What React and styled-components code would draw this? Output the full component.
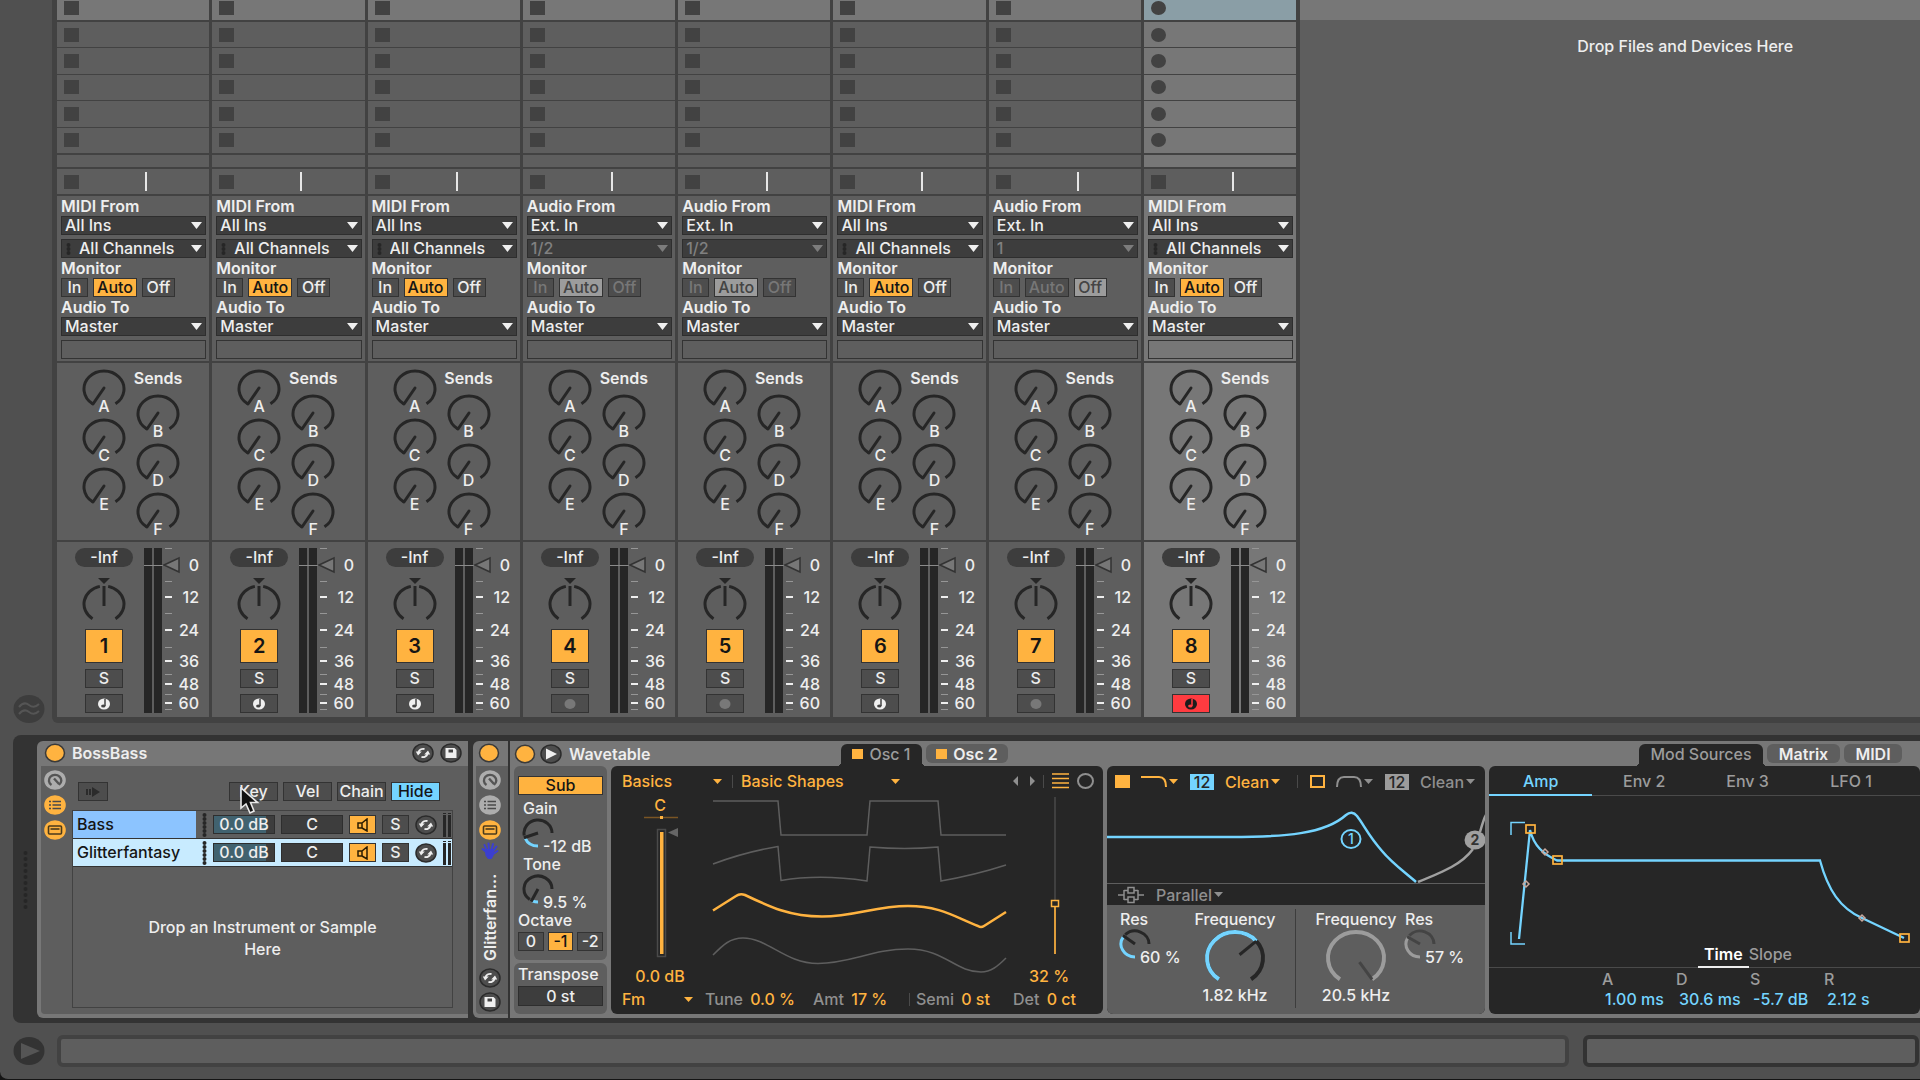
import { useState } from "react";
import styled, { createGlobalStyle } from "styled-components";

const tracks = [
  { id: 1, kind: "midi", from: "All Ins", channel: "All Channels", monitor: "Auto" },
  { id: 2, kind: "midi", from: "All Ins", channel: "All Channels", monitor: "Auto" },
  { id: 3, kind: "midi", from: "All Ins", channel: "All Channels", monitor: "Auto" },
  { id: 4, kind: "audio", from: "Ext. In", channel: "1/2", monitor: "Auto" },
  { id: 5, kind: "audio", from: "Ext. In", channel: "1/2", monitor: "Auto" },
  { id: 6, kind: "midi", from: "All Ins", channel: "All Channels", monitor: "Auto" },
  { id: 7, kind: "audio", from: "Ext. In", channel: "1", monitor: "Off" },
  { id: 8, kind: "midi", from: "All Ins", channel: "All Channels", monitor: "Auto", armed: true },
];

const chains = [
  { name: "Bass", color: "#8cc4ff" },
  { name: "Glitterfantasy", color: "#c8ebff", selected: true },
];

const envelope = [
  ["A", "1.00 ms"],
  ["D", "30.6 ms"],
  ["S", "-5.7 dB"],
  ["R", "2.12 s"],
];

//Point on an ellipse, angle in degrees going clockwise from the right.
const point = (cx, cy, rx, ry, angle) => {
  const rad = (angle * Math.PI) / 180;
  return [cx + rx * Math.cos(rad), cy + ry * Math.sin(rad)];
};

const arc = (cx, cy, rx, ry, from, to) => {
  const [x1, y1] = point(cx, cy, rx, ry, from);
  const [x2, y2] = point(cx, cy, rx, ry, to);
  return `M${x1} ${y1}A${rx} ${ry} 0 ${to - from > 180 ? 1 : 0} 1 ${x2} ${y2}`;
};

const SendKnob = ({ name, track }) => (
  <KnobCell>
    <svg width="44" height="40" viewBox="0 0 44 40" fill="none" stroke="#262626">
      <path d={arc(22, 20, 20, 18, 125, 415)} strokeWidth="3" />
      <path d="M22 19L11 35" strokeWidth="3" strokeLinecap="round" />
    </svg>
    <span>{name}</span>
    <HiddenRange aria-label={`Send ${name} track ${track}`} defaultValue="0" />
  </KnobCell>
);

//Small three-quarter knob, leaves the bottom right corner free for its value.
const SmallKnob = ({ label, text, value, dim }) => {
  const angle = 90 + 270 * value;
  const [x, y] = point(16, 15, 15, 14, angle);
  return (
    <SmallKnobBox>
      <span>{label}</span>
      <SmallKnobBody>
        <svg width="32" height="30" viewBox="0 0 32 30" fill="none" strokeWidth="3">
          <path d={arc(16, 15, 14, 13, 90, angle - 3)} stroke={dim ? "#9c9c9c" : "#74d4ff"} />
          <path d={arc(16, 15, 14, 13, angle + 9, 360)} stroke={dim ? "#444" : "#262626"} />
          <path d={`M16 15L${x} ${y}`} stroke={dim ? "#444" : "#262626"} />
        </svg>
        <output>{text}</output>
        <HiddenRange aria-label={label} defaultValue={value * 100} />
      </SmallKnobBody>
    </SmallKnobBox>
  );
};

const BigKnob = ({ text, value, dim }) => {
  const angle = 125 + 290 * value;
  const [x1, y1] = point(32, 29, 6, 5, angle);
  const [x2, y2] = point(32, 29, 28, 26, angle);
  return (
    <BigKnobBox>
      <span>Frequency</span>
      <svg width="64" height="58" viewBox="0 0 64 58" fill="none" strokeWidth="4">
        <path d={arc(32, 29, 28, 26, 125, 415)} stroke={dim ? "#9c9c9c" : "#262626"} />
        {!dim && <path d={arc(32, 29, 28, 26, 125, angle)} stroke="#74d4ff" />}
        <path d={`M${x1} ${y1}L${x2} ${y2}`} stroke={dim ? "#444" : "#262626"} strokeWidth="3" />
      </svg>
      <output>{text}</output>
      <HiddenRange aria-label="Frequency" defaultValue={value * 100} />
    </BigKnobBox>
  );
};

const Caret = ({ color = "#ffb340", w = 9 }) => (
  <svg width={w} height="5" viewBox="0 0 9 5" aria-hidden="true">
    <path d="M0 0H9L4.500 5Z" fill={color} />
  </svg>
);

const SwapIcon = () => (
  <svg width="22" height="20" viewBox="0 0 22 20">
    <ellipse cx="11" cy="10" rx="10" ry="9" fill="#4d4d4d" stroke="#2b2b2b" strokeWidth="1.500" />
    <path d="M6.500 9.500C7 7 9.500 5.500 12.500 6M15.500 10.500C15 13 12.500 14.500 9.500 14" fill="none" stroke="#eee" strokeWidth="2" />
    <path d="M3.800 8.500H9.800L6 12.500ZM18.200 11.500H12.200L16 7.500Z" fill="#eee" />
  </svg>
);

const SaveIcon = () => (
  <svg width="22" height="20" viewBox="0 0 22 20">
    <ellipse cx="11" cy="10" rx="10" ry="9" fill="#4d4d4d" stroke="#2b2b2b" strokeWidth="1.500" />
    <path d="M5.500 5H14.500L16.500 7V15H5.500Z" fill="#f0f0f0" />
    <path d="M8.500 6.500H13V9.500H8.500Z" fill="#444" />
  </svg>
);

const PowerIcon = () => (
  <svg width="22" height="20" viewBox="0 0 22 20">
    <ellipse cx="11" cy="10" rx="9.500" ry="8.700" fill="#ffb340" stroke="#3a3a3a" strokeWidth="1.500" />
  </svg>
);

const MacroIcon = () => (
  <svg width="22" height="20" viewBox="0 0 22 20">
    <ellipse cx="11" cy="10" rx="10.800" ry="9.800" fill="#adadad" />
    <path d="M7.500 15A6.200 5.600 0 1 1 15 14.800M10 8.500L15 14" fill="none" stroke="#555" strokeWidth="2.400" />
  </svg>
);

const ListIcon = ({ on }) => (
  <svg width="22" height="20" viewBox="0 0 22 20">
    <ellipse cx="11" cy="10" rx="10.800" ry="9.800" fill={on ? "#ffb340" : "#adadad"} />
    <path d="M5 6.500H7M5 10H7M5 13.500H7M8.500 6.500H17M8.500 10H17M8.500 13.500H17" stroke="#4a4a4a" strokeWidth="1.700" />
  </svg>
);

const DeviceIcon = () => (
  <svg width="22" height="20" viewBox="0 0 22 20">
    <ellipse cx="11" cy="10" rx="10.800" ry="9.800" fill="#ffb340" />
    <rect x="4.500" y="6" width="13" height="8" rx="1" fill="none" stroke="#4a3a1c" strokeWidth="1.600" />
    <path d="M6.500 9H15.500" stroke="#4a3a1c" strokeWidth="1.600" />
  </svg>
);

const HandIcon = () => (
  <svg width="18" height="18" viewBox="0 0 18 18">
    <path
      d="M4 9L1.500 7M5.500 8L3.500 3M8 8L7.500 1.500M10.500 8L12 2M12.500 9L15.500 4.500M11.500 12.500L16.500 9"
      stroke="#3b3fd0" strokeWidth="2" strokeLinecap="round"
    />
    <path d="M3.500 7H13L12.500 14L10.500 17H7L4.500 13.500Z" fill="#3b3fd0" />
  </svg>
);

const NoteIcon = ({ color, hole }) => (
  <svg width="14" height="12" viewBox="0 0 14 12">
    <ellipse cx="7" cy="6" rx="6" ry="5.500" fill={color} />
    <path d="M8 1V8" stroke={hole} strokeWidth="1.500" />
    <ellipse cx="6.300" cy="8" rx="2.200" ry="1.600" fill={hole} />
  </svg>
);

const DotColumn = ({ count, r = 2, step = 4, color = "#262626" }) => (
  <svg width={r * 2 + 1} height={count * step} aria-hidden="true">
    {Array.from({ length: count }, (_, i) => (
      <circle key={i} cx={r + 0.5} cy={i * step + step / 2} r={r} fill={color} />
    ))}
  </svg>
);

const Dropdown = ({ label, value, dim, dots }) => (
  <SelectBox>
    <Select aria-label={label} defaultValue={value} disabled={dim} $dots={dots}>
      <option>{value}</option>
    </Select>
    {dots && <Dots><DotColumn count={3} r={2} /></Dots>}
    <Arrow><svg width="11" height="7"><path d="M0 0H11L5.500 7Z" fill={dim ? "#7c7c7c" : "#f0f0f0"} /></svg></Arrow>
  </SelectBox>
);

const Meter = ({ selected }) => {
  const bg = selected ? "#777" : "#5e5e5e";
  return (
    <svg width="58" height="166" viewBox="0 0 58 166">
      <path d="M0 0H8V165H0ZM10 0H18V165H10Z" fill="#262626" />
      <path d="M0 17.500H19" stroke="#8a8a8a" />
      <path d="M20 17L35 10V24Z" fill={bg === "#777" ? bg : "#777"} stroke="#333" strokeWidth="1.500" />
      <path d="M21 .5H28M21 33.500H28M21 65.500H28M21 99.500H28M21 126.500H28M21 146.500H28M21 161.500H28" stroke="#969696" />
      <path d="M21 49H28M21 82H28M21 113H28M21 136H28M21 155H28" stroke="#eee" strokeWidth="2" />
      <ScaleText x="55" y="23">0</ScaleText>
      <ScaleText x="55" y="55">12</ScaleText>
      <ScaleText x="55" y="88">24</ScaleText>
      <ScaleText x="55" y="119">36</ScaleText>
      <ScaleText x="55" y="142">48</ScaleText>
      <ScaleText x="55" y="161">60</ScaleText>
    </svg>
  );
};

const Track = ({ track }) => {
  const [monitor, setMonitor] = useState(track.monitor);
  const audio = track.kind === "audio";
  const sel = track.armed;

  return (
    <TrackColumn>
      <TopSlot $selected={sel}><SlotButton aria-label="Clip slot" $round={sel} /></TopSlot>
      <Slots>
        {[1, 2, 3, 4, 5].map((n) => (
          <Slot key={n} $selected={sel}><SlotButton aria-label="Clip slot" $round={sel} /></Slot>
        ))}
      </Slots>
      <EmptySlot $selected={sel} />
      <StopRow>
        <SlotButton aria-label="Stop clips" />
        <StopLine />
      </StopRow>

      <Routing $selected={sel}>
        <Label>{audio ? "Audio From" : "MIDI From"}</Label>
        <Dropdown label="Input type" value={track.from} />
        <Gap />
        <Dropdown label="Input channel" value={track.channel} dim={audio} dots={!audio} />
        <Label>Monitor</Label>
        <MonitorRow>
          {["In", "Auto", "Off"].map((m) => (
            <MonitorButton key={m} $on={monitor === m} $dim={audio} $w={{ In: 27, Auto: 44, Off: 33 }[m]} onClick={() => setMonitor(m)}>
              {m}
            </MonitorButton>
          ))}
        </MonitorRow>
        <Label>Audio To</Label>
        <Dropdown label="Output type" value="Master" />
        <Gap />
        <OutputBox />
      </Routing>

      <Sends $selected={sel}>
        <SendColumn>
          {["A", "C", "E"].map((s) => <SendKnob key={s} name={s} track={track.id} />)}
        </SendColumn>
        <SendColumn>
          <SendsTitle>Sends</SendsTitle>
          {["B", "D", "F"].map((s) => <SendKnob key={s} name={s} track={track.id} />)}
        </SendColumn>
      </Sends>

      <Mixer $selected={sel}>
        <MixerControls>
          <Peak>-Inf</Peak>
          <Pan>
            <svg width="44" height="46" viewBox="0 0 44 46" fill="none" stroke="#262626" strokeWidth="3">
              <path d="M16 1H28L22 7Z" fill="#262626" stroke="none" />
              <path d={arc(22, 27, 20, 18, 125, 258)} />
              <path d={arc(22, 27, 20, 18, 282, 415)} />
              <path d="M22 9V29" />
            </svg>
            <HiddenRange aria-label={`Pan track ${track.id}`} />
          </Pan>
          <Activator>{track.id}</Activator>
          <SmallButton aria-label="Solo">S</SmallButton>
          <SmallButton aria-label="Arm" $armed={sel}>
            {audio ? (
              <svg width="14" height="12"><ellipse cx="7" cy="6" rx="5.500" ry="5" fill="#787878" /></svg>
            ) : (
              <NoteIcon color={sel ? "#1c1c1c" : "#f0f0f0"} hole={sel ? "#ff3b40" : "#444"} />
            )}
          </SmallButton>
        </MixerControls>
        <Meter selected={sel} />
      </Mixer>
    </TrackColumn>
  );
};

const Session = () => (
  <SessionRow>
    <Gutter>
      <svg width="32" height="28" viewBox="0 0 32 28">
        <ellipse cx="16" cy="14" rx="15.500" ry="14" fill="#3d3d3d" />
        <path d="M6 12Q11 6 16 10T26 9M6 19Q11 13 16 17T26 16" fill="none" stroke="#555" strokeWidth="2" />
      </svg>
    </Gutter>
    <SessionFrame>
      <TrackGrid>
        {tracks.map((track) => <Track key={track.id} track={track} />)}
      </TrackGrid>
      <DropZone>
        <DropTop />
        <DropText>Drop Files and Devices Here</DropText>
      </DropZone>
    </SessionFrame>
  </SessionRow>
);

const InstrumentRack = () => (
  <Rack>
    <RackHeader>
      <PowerIcon />
      <Title>BossBass</Title>
      <IconButton aria-label="Hot-swap"><SwapIcon /></IconButton>
      <IconButton aria-label="Save preset"><SaveIcon /></IconButton>
    </RackHeader>
    <RackBody>
      <IconColumn>
        <MacroIcon />
        <ListIcon on />
        <DeviceIcon />
      </IconColumn>
      <RackMain>
        <RackToolbar>
          <RackButton aria-label="Auto select" $w={30}>
            <svg width="14" height="10"><path d="M0 2H2V8H0ZM3 2H5V8H3ZM6 0L14 5L6 10Z" fill="#2b2b2b" /></svg>
          </RackButton>
          <Spacer />
          <RackButton $w={49}>
            Key
            <Cursor width="20" height="28" viewBox="0 0 20 28">
              <path d="M1 1V21L6 17L10 26L14 24L10.500 15.500H17.500Z" fill="#111" stroke="#e8e8e8" strokeWidth="1.600" />
            </Cursor>
          </RackButton>
          <RackButton $w={49}>Vel</RackButton>
          <RackButton $w={49}>Chain</RackButton>
          <RackButton $w={49} $on>Hide</RackButton>
        </RackToolbar>
        <ChainList>
          {chains.map((chain) => (
            <ChainRow key={chain.name} $color={chain.selected && chain.color}>
              <ChainName $color={chain.color}>{chain.name}</ChainName>
              <DotColumn count={6} r={2} step={4} />
              <ChainVolume>0.0 dB</ChainVolume>
              <ChainPan>C</ChainPan>
              <ChainButton $on aria-label="Chain activator">
                <svg width="14" height="14" fill="none" stroke="#2b1c00" strokeWidth="1.500">
                  <path d="M2 5H6V10H2ZM6 5L11 1V13L6 10" />
                </svg>
              </ChainButton>
              <ChainButton aria-label="Solo chain">S</ChainButton>
              <IconButton aria-label="Hot-swap"><SwapIcon /></IconButton>
              <svg width="8" height="24"><path d="M0 0H3V1H0ZM5 0H8V1H5ZM0 2H3V24H0ZM5 2H8V24H5Z" fill="#262626" /></svg>
            </ChainRow>
          ))}
          <ChainDrop>Drop an Instrument or Sample Here</ChainDrop>
        </ChainList>
      </RackMain>
    </RackBody>
  </Rack>
);

const FoldedRack = () => (
  <Folded>
    <FoldedHeader><PowerIcon /></FoldedHeader>
    <FoldedBody>
      <IconColumn>
        <MacroIcon />
        <ListIcon />
        <DeviceIcon />
      </IconColumn>
      <HandIcon />
      <VerticalTitle>Glitterfan...</VerticalTitle>
      <IconButton aria-label="Hot-swap"><SwapIcon /></IconButton>
      <Gap />
      <IconButton aria-label="Save preset"><SaveIcon /></IconButton>
    </FoldedBody>
  </Folded>
);

const SubPanel = () => (
  <SubColumn>
    <SubBox>
      <SubButton>Sub</SubButton>
      <SmallKnob label="Gain" text="-12 dB" value={0.26} />
      <SmallKnob label="Tone" text="9.5 %" value={0.1} />
      <PlainLabel>Octave</PlainLabel>
      <OctaveRow>
        <OctaveButton>0</OctaveButton>
        <OctaveButton $on>-1</OctaveButton>
        <OctaveButton>-2</OctaveButton>
      </OctaveRow>
    </SubBox>
    <TransposeBox>
      <PlainLabel>Transpose</PlainLabel>
      <TransposeValue>0 st</TransposeValue>
    </TransposeBox>
  </SubColumn>
);

const OscPanel = () => (
  <DarkPanel>
    <OscHeader>
      <Picker $w={100}>Basics <Caret /></Picker>
      <Divider />
      <Picker $w={159}>Basic Shapes <Caret /></Picker>
      <Spacer />
      <svg width="22" height="10"><path d="M5 0V10L0 5ZM17 0V10L22 5Z" fill="#8f8f8f" /></svg>
      <Divider />
      <svg width="17" height="16"><path d="M0 1H17M0 5.500H17M0 10H17M0 14.500H17" stroke="#ffb340" strokeWidth="1.700" /></svg>
      <svg width="17" height="16"><ellipse cx="8.500" cy="8" rx="7.500" ry="7" fill="none" stroke="#8f8f8f" strokeWidth="2" /></svg>
    </OscHeader>
    <OscMain>
      <OscSide>
        <Orange>C</Orange>
        <SliderBox>
          <svg width="36" height="144" viewBox="0 0 36 144">
            <path d="M1 3.500H35" stroke="#7a5524" strokeWidth="1.500" />
            <path d="M17 2H20V5H17Z" fill="#ffb340" />
            <rect x="14.500" y="15.500" width="8" height="127" fill="none" stroke="#4a4a4a" strokeWidth="1.500" />
            <path d="M17 18H20.500V140H17Z" fill="#ffb340" />
            <path d="M25 18.500L35 14V23Z" fill="#666" />
          </svg>
          <HiddenRange aria-label="Oscillator gain" defaultValue="100" />
        </SliderBox>
        <Orange>0.0 dB</Orange>
      </OscSide>
      <svg width="296" height="184" viewBox="711 796 296 184" fill="none" stroke="#5e5e5e" strokeWidth="1.500">
        <path d="M713 801H778L781 835H867L870 801H938L941 835H1006" />
        <path d="M713 864Q745 852 778 846.500L781 880.500Q820 874 867 881L870 847Q905 850 938 847L941 881Q975 875 1006 865" />
        <path
          d="M713 910.500L736 896Q740 893 745 895C770 907 790 916.500 822 916.500C855 916.500 875 906 908 906C940 906 955 917 978 926Q981 928 984 926L1006 912"
          stroke="#ffb340" strokeWidth="2.500"
        />
        <path d="M713 955C723 945 730 938 743 938C768 938 785 963.500 818 963.500C850 963.500 873 949 908 949C945 949 955 972 981 972C991 972 998 966 1006 958" />
      </svg>
      <OscSide>
        <SliderBox>
          <svg width="20" height="162" viewBox="0 2 20 162" fill="none">
            <path d="M10 3V106" stroke="#4a4a4a" strokeWidth="1.500" />
            <path d="M10 113V160" stroke="#ffb340" strokeWidth="1.700" />
            <rect x="6.500" y="106.500" width="7" height="6" stroke="#ffb340" strokeWidth="1.500" />
          </svg>
          <HiddenRange aria-label="Wavetable position" defaultValue="32" />
        </SliderBox>
        <Orange $shift>32 %</Orange>
      </OscSide>
    </OscMain>
    <OscFooter>
      <Picker $w={71}>Fm <Caret /></Picker>
      <Param $w={96}><i>Tune</i> 0.0 %</Param>
      <Param $w={84}><i>Amt</i> 17 %</Param>
      <Divider />
      <Param $w={85}><i>Semi</i> 0 st</Param>
      <Param $w={70}><i>Det</i> 0 ct</Param>
    </OscFooter>
  </DarkPanel>
);

const FilterHead = ({ on }) => {
  const color = on ? "#ffb340" : "#8f8f8f";
  return (
    <FilterHeadBox>
      <FilterToggle $on={on} aria-label="Filter on" />
      <FilterShape>
        <svg width="26" height="12" fill="none" stroke={color} strokeWidth="2">
          <path d={on ? "M0 1H18Q25 1 25 11" : "M1 11Q1 1 8 1H18Q25 1 25 11"} />
        </svg>
        <Caret color={color} />
      </FilterShape>
      <Slope12 $on={on}>12</Slope12>
      <FilterType $on={on}>Clean<Caret color={color} /></FilterType>
    </FilterHeadBox>
  );
};

const FilterPanel = () => (
  <DarkPanel>
    <FilterHeader>
      <FilterHead on />
      <Divider />
      <FilterHead />
    </FilterHeader>
    <svg width="379" height="86" viewBox="1107 797 379 86" fill="none" strokeWidth="2.500">
      <path d="M1418 882C1445 871 1462 864 1473 849M1480 832Q1484 818 1486 815" stroke="#a0a0a0" />
      <path d="M1107 837H1230C1285 837 1325 834 1346 815Q1352 810 1357 816C1364 825 1368 835 1382 851C1391 862 1402 870 1416 882" stroke="#74d4ff" />
      <ellipse cx="1351" cy="839" rx="9.500" ry="9" stroke="#74d4ff" strokeWidth="2" />
      <GraphText x="1351" y="844" fill="#74d4ff">1</GraphText>
      <ellipse cx="1475" cy="840" rx="10.500" ry="9.500" fill="#a0a0a0" />
      <GraphText x="1475" y="845" fill="#333" $bold>2</GraphText>
    </svg>
    <FilterRouting>
      <svg width="26" height="18" fill="none" stroke="#8f8f8f" strokeWidth="1.500">
        <path d="M0 9H6M20 9H26M6 4.500H10M16 4.500H20M6 13.500H10M16 13.500H20M6 4V14M20 4V14M10 1.500H16V7H10ZM10 11H16V16.500H10Z" />
      </svg>
      <span>Parallel<Caret color="#8f8f8f" /></span>
    </FilterRouting>
    <FilterKnobs>
      <FilterHalf>
        <SmallKnob label="Res" text="60 %" value={0.47} />
        <BigKnob text="1.82 kHz" value={0.67} />
      </FilterHalf>
      <FilterSplit />
      <FilterHalf $reverse>
        <BigKnob text="20.5 kHz" value={1} dim />
        <SmallKnob label="Res" text="57 %" value={0.45} dim />
      </FilterHalf>
    </FilterKnobs>
  </DarkPanel>
);

const Handle = ({ x, y }) => (
  <rect x={x - 4} y={y - 4} width="9" height="8" stroke="#ffb340" strokeWidth="1.700" />
);

const Diamond = ({ x, y }) => (
  <path d={`M${x - 3} ${y}L${x} ${y - 3}L${x + 3} ${y}L${x} ${y + 3}Z`} stroke="#c9a79a" strokeWidth="1.500" />
);

const ModPanel = () => {
  const [tab, setTab] = useState("Amp");
  return (
    <DarkPanel>
      <ModTabs>
        {["Amp", "Env 2", "Env 3", "LFO 1"].map((t) => (
          <ModTab key={t} $on={t === tab} onClick={() => setTab(t)}>{t}</ModTab>
        ))}
      </ModTabs>
      <svg width="431" height="149" viewBox="1489 796 431 149" fill="none">
        <path d="M1511 835V822.500H1525M1511 932V944H1525" stroke="#74d4ff" strokeWidth="1.500" />
        <path
          d="M1519 939L1530 830C1534 846 1543 854 1557 860.500H1820C1828 890 1840 908 1862 918L1904 938"
          stroke="#74d4ff" strokeWidth="2.300"
        />
        <Handle x={1530} y={829} />
        <Handle x={1557} y={860} />
        <Handle x={1904} y={938} />
        <Diamond x={1545} y={852} />
        <Diamond x={1526} y={884} />
        <Diamond x={1862} y={918} />
      </svg>
      <TimeTabs>
        <TimeTab $on>Time</TimeTab>
        <TimeTab>Slope</TimeTab>
      </TimeTabs>
      <EnvValues>
        {envelope.map(([name, value]) => (
          <EnvValue key={name}>
            <dt>{name}</dt>
            <dd>{value}</dd>
          </EnvValue>
        ))}
      </EnvValues>
    </DarkPanel>
  );
};

const Wavetable = () => (
  <WavetableBox>
    <WavetableHeader>
      <WavetableName>
        <PowerIcon />
        <IconButton aria-label="Preview">
          <svg width="22" height="20">
            <ellipse cx="11" cy="10" rx="10" ry="9" fill="#4d4d4d" stroke="#2b2b2b" strokeWidth="1.500" />
            <path d="M6 4.500L17 10L6 15.500Z" fill="#f0f0f0" />
          </svg>
        </IconButton>
        <Title>Wavetable</Title>
      </WavetableName>
      <Tab $active $w={81}><TabSquare />Osc 1</Tab>
      <Tab $w={82}><TabSquare />Osc 2</Tab>
      <Spacer />
      <Tab $active $w={124}>Mod Sources</Tab>
      <Tab $w={73}>Matrix</Tab>
      <Tab $w={58}>MIDI</Tab>
    </WavetableHeader>
    <Panels>
      <SubPanel />
      <OscPanel />
      <FilterPanel />
      <ModPanel />
    </Panels>
  </WavetableBox>
);

const App = () => (
  <Window>
    <GlobalStyle />
    <Session />
    <DeviceView>
      <DragHandle><DotColumn count={10} r={2} step={6} /></DragHandle>
      <InstrumentRack />
      <FoldedRack />
      <Wavetable />
    </DeviceView>
    <StatusRow>
      <IconButton aria-label="Show info">
        <svg width="32" height="28">
          <ellipse cx="16" cy="14" rx="15.500" ry="14" fill="#333" />
          <path d="M8 6L27 14L8 22Z" fill="#555" />
        </svg>
      </IconButton>
      <StatusBar />
      <StatusBar $end />
    </StatusRow>
  </Window>
);

export default App;

const GlobalStyle = createGlobalStyle`
  * {
    box-sizing: border-box;
  }
  body {
    margin: 0;
    background: #151515;
    color: #eee;
    font-family: Inter, "Liberation Sans", sans-serif;
    font-size: 16px;
    font-weight: 500;
    line-height: 18px;
  }
  button, input, select {
    font: inherit;
    color: inherit;
    padding: 0;
    margin: 0;
  }
  svg {
    display: block;
    flex: none;
  }
`;

const Window = styled.div`
  display: flex;
  flex-direction: column;
  background: #505050;
  border-bottom: 1px solid #151515;
  border-bottom-left-radius: 8px;
  overflow: hidden;
`;

const SessionRow = styled.div`
  display: flex;
`;

const Gutter = styled.div`
  display: flex;
  align-items: flex-end;
  width: 52px;
  padding-left: 13px;
`;

const SessionFrame = styled.div`
  display: flex;
  flex: 1;
  gap: 4px;
  padding: 0 0 6px 5px;
  background: #424242;
  border-bottom-left-radius: 6px;
`;

const TrackGrid = styled.div`
  flex: 2 1 0;
  display: grid;
  grid-template-columns: repeat(8, minmax(0, 1fr));
  gap: 3px;
`;

const DropZone = styled.div`
  flex: 1 1 0;
  background: #5e5e5e;
`;

const DropTop = styled.div`
  height: 20px;
  background: #777;
`;

const DropText = styled.p`
  margin: 0;
  padding: 17px 0 0 150px;
  text-align: center;
`;

const TrackColumn = styled.div`
  display: flex;
  flex-direction: column;
`;

const Slot = styled.div`
  display: flex;
  align-items: center;
  padding-left: 7px;
  background: ${(props) => (props.$selected ? "#777" : "#5e5e5e")};
`;

const TopSlot = styled(Slot)`
  height: 20px;
  padding-bottom: 5px;
  background: ${(props) => (props.$selected ? "#8a9ea6" : "#777")};
`;

const Slots = styled.div`
  display: grid;
  grid-template-rows: repeat(5, 1fr);
  gap: 1px;
  height: 131px;
  margin-top: 2px;
`;

const SlotButton = styled.button`
  width: 15px;
  height: 14px;
  border: 0;
  background: #424242;
  border-radius: ${(props) => (props.$round ? "50%" : "0")};
`;

const EmptySlot = styled.div`
  height: 12px;
  margin-top: 2px;
  background: ${(props) => (props.$selected ? "#777" : "#5e5e5e")};
`;

const StopRow = styled(Slot)`
  height: 25px;
  margin-top: 2px;
`;

const StopLine = styled.span`
  width: 2px;
  height: 19px;
  margin-left: 66px;
  background: #e6e6e6;
`;

const Routing = styled.div`
  height: 165px;
  margin-top: 2px;
  padding: 0 3px 0 4px;
  background: ${(props) => (props.$selected ? "#777" : "#5e5e5e")};
`;

const Label = styled.div`
  height: 20px;
  line-height: 20px;
  font-weight: 600;
`;

const Gap = styled.div`
  height: 4px;
`;

const SelectBox = styled.div`
  display: grid;
  grid-template-columns: 1fr;
  align-items: center;
  height: 19px;
  background: #3d3d3d;
  border: 1px solid #2e2e2e;

  > * {
    grid-area: 1 / 1;
  }
`;

const Select = styled.select`
  appearance: none;
  width: 100%;
  height: 17px;
  line-height: 17px;
  border: 0;
  background: none;
  padding-left: ${(props) => (props.$dots ? "17px" : "3px")};
  opacity: 1;
  color: ${(props) => (props.disabled ? "#808080" : "#eee")};
`;

const Dots = styled.span`
  justify-self: start;
  padding-left: 4px;
  pointer-events: none;
`;

const Arrow = styled.span`
  justify-self: end;
  padding-right: 3px;
  pointer-events: none;
`;

const MonitorRow = styled.div`
  display: flex;
  gap: 5px;
`;

const BaseButton = styled.button`
  display: flex;
  align-items: center;
  justify-content: center;
  height: 19px;
  line-height: 17px;
  border: 1px solid #333;
  background: #4d4d4d;
  color: #eee;
`;

const MonitorButton = styled(BaseButton)`
  width: ${(props) => props.$w}px;
  background: ${(props) => (props.$on ? (props.$dim ? "#9c9c9c" : "#ffb340") : "#4d4d4d")};
  color: ${(props) => (props.$on ? (props.$dim ? "#444" : "#151515") : props.$dim ? "#777" : "#eee")};
`;

const OutputBox = styled.div`
  height: 19px;
  border: 1px solid #333;
`;

const Sends = styled.div`
  display: grid;
  grid-template-columns: 54px 54px;
  height: 177px;
  margin-top: 2px;
  padding: 6px 0 0 20px;
  background: ${(props) => (props.$selected ? "#777" : "#5e5e5e")};
`;

const SendColumn = styled.div`
  display: flex;
  flex-direction: column;
  align-items: center;
  gap: 4px;
`;

const SendsTitle = styled.div`
  padding-bottom: 3px;
  font-weight: 600;
`;

const KnobCell = styled.div`
  display: grid;
  justify-items: center;
  height: 45px;

  > * {
    grid-area: 1 / 1;
  }
  > span {
    align-self: end;
    line-height: 16px;
  }
`;

//Keeps every knob and fader keyboard accessible, the drawing sits underneath.
const HiddenRange = styled.input.attrs({ type: "range" })`
  align-self: stretch;
  width: 0;
  min-width: 100%;
  height: 100%;
  opacity: 0;
`;

const Mixer = styled.div`
  display: flex;
  gap: 11px;
  height: 175px;
  margin-top: 2px;
  padding: 6px 0 0 18px;
  background: ${(props) => (props.$selected ? "#777" : "#5e5e5e")};
`;

const MixerControls = styled.div`
  display: flex;
  flex-direction: column;
  align-items: center;
  gap: 6px;
  width: 58px;
`;

const Peak = styled.div`
  width: 58px;
  height: 19px;
  line-height: 19px;
  border-radius: 10px;
  background: #3d3d3d;
  text-align: center;
`;

const Pan = styled.div`
  display: grid;
  padding: 4px 0 0;
  height: 50px;

  > * {
    grid-area: 1 / 1;
  }
`;

const Activator = styled(BaseButton)`
  width: 38px;
  height: 34px;
  background: #ffb340;
  color: #151515;
  font-size: 20px;
  font-weight: 600;
`;

const SmallButton = styled(BaseButton)`
  width: 38px;
  background: ${(props) => (props.$armed ? "#ff3b40" : "#4d4d4d")};
`;

const ScaleText = styled.text`
  fill: #eee;
  font-size: 16px;
  text-anchor: end;
`;

const GraphText = styled.text`
  font-size: 14px;
  font-weight: ${(props) => (props.$bold ? 700 : 500)};
  text-anchor: middle;
  stroke: none;
`;

const DeviceView = styled.div`
  display: flex;
  height: 288px;
  margin: 12px 0 0 13px;
  padding: 6px 0 5px;
  background: #333;
  border-radius: 8px 0 0 8px;
`;

const DragHandle = styled.div`
  display: flex;
  align-items: center;
  width: 24px;
  padding-left: 10px;
`;

const Rack = styled.section`
  width: 431px;
  padding-bottom: 4px;
  background: #777;
  border-radius: 6px 0 0 6px;
`;

const RackHeader = styled.header`
  display: flex;
  align-items: center;
  gap: 6px;
  height: 25px;
  padding: 0 6px 1px 7px;
`;

const Title = styled.h2`
  flex: 1;
  margin: 0;
  font-size: 16px;
  font-weight: 600;
  line-height: 20px;
`;

const IconButton = styled.button`
  flex: none;
  border: 0;
  background: none;
`;

const RackBody = styled.div`
  display: flex;
  height: 248px;
  margin-left: 4px;
  background: #5e5e5e;
  border-bottom-left-radius: 4px;
`;

const IconColumn = styled.div`
  display: flex;
  flex-direction: column;
  gap: 5px;
  padding: 4px 0 0 3px;
`;

const RackMain = styled.div`
  flex: 1;
  padding: 16px 15px 6px 6px;
`;

const RackToolbar = styled.div`
  display: flex;
  gap: 5px;
  padding: 0 13px 9px 6px;
`;

const Spacer = styled.div`
  flex: 1;
`;

const RackButton = styled(BaseButton)`
  position: relative;
  width: ${(props) => props.$w}px;
  background: ${(props) => (props.$on ? "#74d4ff" : "#4d4d4d")};
  color: ${(props) => (props.$on ? "#151515" : "#eee")};
`;

const Cursor = styled.svg`
  position: absolute;
  left: 10px;
  top: 4px;
  z-index: 2;
`;

const ChainList = styled.div`
  height: 198px;
  border: 1px solid #424242;
`;

const ChainRow = styled.div`
  display: flex;
  align-items: center;
  gap: 6px;
  height: 28px;
  border-bottom: 1px solid #333;
  background: ${(props) => props.$color || "#5e5e5e"};
`;

const ChainName = styled.div`
  align-self: stretch;
  width: 123px;
  padding-left: 4px;
  line-height: 26px;
  background: ${(props) => props.$color};
  color: #151515;
`;

const ChainVolume = styled.div`
  width: 62px;
  height: 19px;
  line-height: 17px;
  border: 1px solid #2e2e2e;
  background: linear-gradient(90deg, #41626f 86%, #3d3d3d 86%);
  text-align: center;
`;

const ChainPan = styled(ChainVolume)`
  background: #3d3d3d;
`;

const ChainButton = styled(BaseButton)`
  width: 27px;
  background: ${(props) => (props.$on ? "#ffb340" : "#4d4d4d")};
`;

const ChainDrop = styled.p`
  margin: 0 auto;
  width: 260px;
  padding-top: 49px;
  line-height: 22px;
  text-align: center;
`;

const Folded = styled.section`
  width: 35px;
  margin: 0 2px 0 5px;
  padding-bottom: 4px;
  background: #777;
  border-radius: 6px 0 0 6px;
`;

const FoldedHeader = styled.header`
  display: flex;
  align-items: center;
  height: 25px;
  padding: 0 0 1px 5px;
`;

const FoldedBody = styled.div`
  display: flex;
  flex-direction: column;
  align-items: center;
  height: 248px;
  margin-left: 3px;
  padding: 0 5px 2px 0;
  background: #5e5e5e;
  border-bottom-left-radius: 4px;

  > ${IconColumn} {
    padding-left: 0;
    padding-bottom: 2px;
  }
`;

const VerticalTitle = styled.div`
  flex: 1;
  writing-mode: vertical-rl;
  transform: rotate(180deg);
  padding-top: 7px;
  font-weight: 600;
`;

const WavetableBox = styled.section`
  display: flex;
  flex-direction: column;
  flex: 1;
  min-width: 0;
  padding: 0 0 4px 4px;
  background: #777;
`;

const WavetableHeader = styled.header`
  display: flex;
  gap: 4px;
  height: 25px;
  padding: 3px 18px 0 0;
`;

const WavetableName = styled.div`
  display: flex;
  align-items: center;
  gap: 4px;
  width: 323px;
  height: 19px;

  ${Title} {
    padding-left: 3px;
  }
`;

const Tab = styled.button`
  position: relative;
  display: flex;
  align-items: center;
  justify-content: center;
  gap: 6px;
  width: ${(props) => props.$w}px;
  height: ${(props) => (props.$active ? 22 : 19)}px;
  padding-bottom: ${(props) => (props.$active ? 3 : 0)}px;
  border: 0;
  border-radius: ${(props) => (props.$active ? "6px 6px 0 0" : "6px")};
  background: ${(props) => (props.$active ? "#262626" : "#5e5e5e")};
  color: ${(props) => (props.$active ? "#9c9c9c" : "#eee")};
  font-weight: ${(props) => (props.$active ? 500 : 600)};

  &::before, &::after {
    content: "";
    display: ${(props) => (props.$active ? "block" : "none")};
    position: absolute;
    bottom: 0;
    width: 4px;
    height: 4px;
  }
  &::before {
    right: 100%;
    background: radial-gradient(circle at 0 0, #777 4px, #262626 4px);
  }
  &::after {
    left: 100%;
    background: radial-gradient(circle at 100% 0, #777 4px, #262626 4px);
  }
`;

const TabSquare = styled.span`
  width: 11px;
  height: 10px;
  background: #ffb340;
`;

const Panels = styled.div`
  flex: 1;
  display: grid;
  grid-template-columns: 93px 492px 378px minmax(0, 1fr);
  gap: 4px;
`;

const SubColumn = styled.div`
  display: flex;
  flex-direction: column;
  gap: 3px;
`;

const SubBox = styled.div`
  height: 194px;
  padding: 10px 4px 0;
  background: #5e5e5e;
  border-radius: 6px;
`;

const SubButton = styled(BaseButton)`
  width: 100%;
  margin-bottom: 3px;
  background: #ffb340;
  color: #151515;
`;

const SmallKnobBox = styled.div`
  height: 56px;

  > span {
    display: block;
    padding-left: 1px;
    line-height: 20px;
  }
  ${SubBox} & {
    padding-left: 4px;
  }
`;

const SmallKnobBody = styled.div`
  display: grid;
  grid-template-columns: 1fr;
  width: 76px;
  height: 37px;

  > * {
    grid-area: 1 / 1;
  }
  > output {
    align-self: end;
    padding-left: 21px;
    white-space: nowrap;
  }
`;

const PlainLabel = styled.div`
  height: 22px;
  line-height: 20px;
`;

const OctaveRow = styled.div`
  display: grid;
  grid-template-columns: repeat(3, 1fr);
  gap: 4px;
`;

const OctaveButton = styled(BaseButton)`
  background: ${(props) => (props.$on ? "#ffb340" : "#4d4d4d")};
  color: ${(props) => (props.$on ? "#151515" : "#eee")};
`;

const TransposeBox = styled.div`
  flex: 1;
  padding: 1px 4px 0;
  background: #5e5e5e;
  border-radius: 6px;
`;

const TransposeValue = styled.div`
  height: 20px;
  line-height: 18px;
  border: 1px solid #2e2e2e;
  background: #3d3d3d;
  text-align: center;
`;

const DarkPanel = styled.div`
  display: flex;
  flex-direction: column;
  height: 248px;
  overflow: hidden;
  background: #262626;
  border-radius: 6px;
`;

const Picker = styled.button`
  display: flex;
  align-items: center;
  justify-content: space-between;
  width: ${(props) => props.$w}px;
  border: 0;
  background: none;
  color: #ffb340;
`;

const OscHeader = styled.div`
  display: flex;
  align-items: center;
  gap: 8px;
  height: 30px;
  padding: 0 9px 0 11px;

  ${Picker} {
    margin-right: 2px;
  }
`;

const Divider = styled.span`
  width: 1px;
  height: 13px;
  background: #4a4a4a;
`;

const OscMain = styled.div`
  display: grid;
  grid-template-columns: 100px 296px 96px;
  height: 190px;
`;

const OscSide = styled.div`
  display: flex;
  flex-direction: column;
  align-items: center;
`;

const Orange = styled.output`
  padding-right: ${(props) => (props.$shift ? 12 : 2)}px;
  line-height: 18px;
  color: #ffb340;
`;

const SliderBox = styled.div`
  display: grid;
  margin-bottom: 9px;

  > * {
    grid-area: 1 / 1;
  }
`;

const OscFooter = styled.div`
  display: flex;
  align-items: center;
  gap: 6px;
  padding: 4px 0 0 11px;

  ${Picker} {
    margin-right: 6px;
  }
`;

const Param = styled.div`
  width: ${(props) => props.$w + 6}px;
  color: #ffb340;

  > i {
    font-style: normal;
    color: #8f8f8f;
    padding-right: 3px;
  }
`;

const FilterHeader = styled.div`
  display: flex;
  align-items: center;
  gap: 12px;
  height: 31px;
  padding: 0 0 0 8px;
`;

const FilterHeadBox = styled.div`
  display: flex;
  align-items: center;
  width: 170px;
`;

const FilterToggle = styled.button`
  width: 15px;
  height: 13px;
  border: 2px solid #ffb340;
  background: ${(props) => (props.$on ? "#ffb340" : "none")};
`;

const FilterShape = styled.div`
  display: flex;
  align-items: center;
  gap: 2px;
  margin: 0 12px 0 11px;
`;

const Slope12 = styled.span`
  width: 24px;
  height: 16px;
  line-height: 16px;
  margin-right: 11px;
  background: ${(props) => (props.$on ? "#74d4ff" : "#9c9c9c")};
  color: #262626;
  text-align: center;
`;

const FilterType = styled.span`
  display: flex;
  align-items: center;
  gap: 2px;
  color: ${(props) => (props.$on ? "#ffb340" : "#8f8f8f")};
`;

const FilterRouting = styled.div`
  display: flex;
  align-items: center;
  gap: 12px;
  height: 22px;
  padding-left: 11px;
  border-top: 1px solid #5e5e5e;
  color: #8f8f8f;

  > span {
    display: flex;
    align-items: center;
    gap: 2px;
  }
`;

const FilterKnobs = styled.div`
  flex: 1;
  display: flex;
  padding-top: 4px;
  background: #5e5e5e;
`;

const FilterHalf = styled.div`
  display: flex;
  gap: 3px;
  width: 188px;
  padding-left: ${(props) => (props.$reverse ? 15 : 12)}px;

  > ${SmallKnobBox} {
    width: 68px;
  }
`;

const FilterSplit = styled.span`
  width: 1px;
  height: 99px;
  background: #3d3d3d;
`;

const BigKnobBox = styled.div`
  display: grid;
  grid-template-rows: 20px 56px 20px;
  justify-items: center;
  width: 90px;
  line-height: 20px;

  > input {
    grid-area: 2 / 1;
  }
  > svg {
    grid-area: 2 / 1;
  }
  > output {
    grid-area: 3 / 1;
  }
`;

const ModTabs = styled.div`
  display: flex;
  border-bottom: 1px solid #4a4a4a;
`;

const ModTab = styled.button`
  flex: 0 0 24%;
  height: 30px;
  border: 0;
  border-bottom: 2px solid ${(props) => (props.$on ? "#74d4ff" : "transparent")};
  background: none;
  color: ${(props) => (props.$on ? "#74d4ff" : "#9c9c9c")};
  padding-top: 2px;
  margin-bottom: -1px;
`;

const TimeTabs = styled.div`
  display: flex;
  height: 23px;
  padding-left: 209px;
  border-bottom: 1px solid #4a4a4a;
`;

const TimeTab = styled.button`
  height: 23px;
  padding: 0 6px 4px;
  border: 0;
  border-bottom: 2px solid ${(props) => (props.$on ? "#eee" : "transparent")};
  background: none;
  color: ${(props) => (props.$on ? "#fff" : "#9c9c9c")};
  font-weight: ${(props) => (props.$on ? 600 : 500)};

  & + & {
    padding-left: 0;
  }
`;

const EnvValues = styled.dl`
  display: grid;
  grid-template-columns: repeat(4, 74px);
  margin: 0;
  padding: 1px 0 0 113px;
`;

const EnvValue = styled.div`
  line-height: 20px;

  > dt {
    color: #9c9c9c;
  }
  > dd {
    margin: 0;
    padding-left: 3px;
    color: #74d4ff;
    white-space: nowrap;
  }
`;

const StatusRow = styled.footer`
  display: flex;
  align-items: center;
  height: 56px;
  padding: 0 1px 1px 13px;

  > button {
    margin-right: 12px;
  }
`;

const StatusBar = styled.div`
  flex: ${(props) => (props.$end ? "0 0 336px" : "1")};
  height: 32px;
  margin-left: ${(props) => (props.$end ? "14px" : "0")};
  border: 4px solid ${(props) => (props.$end ? "#333" : "#424242")};
  border-radius: 6px;
  background: #5e5e5e;
`;
